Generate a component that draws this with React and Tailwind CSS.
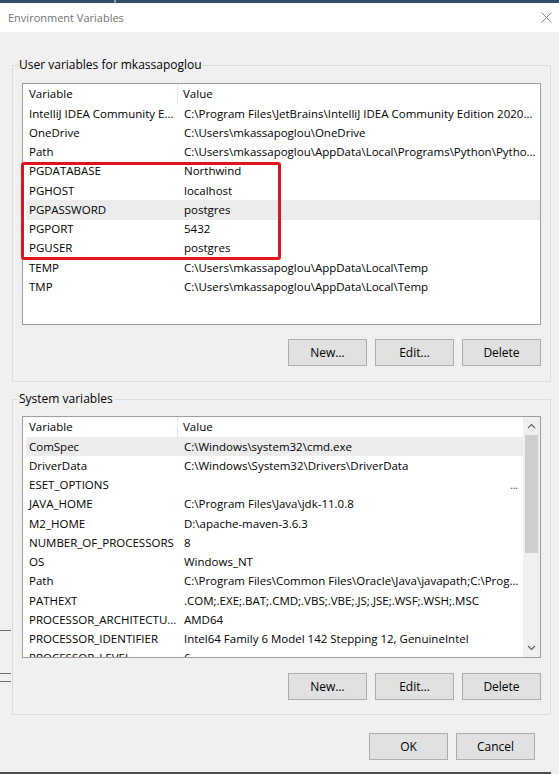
import React from 'react';

const userVars = [
  ['IntelliJ IDEA Community E…', 'C:\\Program Files\\JetBrains\\IntelliJ IDEA Community Edition 2020…'],
  ['OneDrive', 'C:\\Users\\mkassapoglou\\OneDrive'],
  ['Path', 'C:\\Users\\mkassapoglou\\AppData\\Local\\Programs\\Python\\Pytho…'],
  ['PGDATABASE', 'Northwind'],
  ['PGHOST', 'localhost'],
  ['PGPASSWORD', 'postgres', true],
  ['PGPORT', '5432'],
  ['PGUSER', 'postgres'],
  ['TEMP', 'C:\\Users\\mkassapoglou\\AppData\\Local\\Temp'],
  ['TMP', 'C:\\Users\\mkassapoglou\\AppData\\Local\\Temp'],
];

const sysVars = [
  ['ComSpec', 'C:\\Windows\\system32\\cmd.exe', true],
  ['DriverData', 'C:\\Windows\\System32\\Drivers\\DriverData'],
  ['ESET_OPTIONS', null],
  ['JAVA_HOME', 'C:\\Program Files\\Java\\jdk-11.0.8'],
  ['M2_HOME', 'D:\\apache-maven-3.6.3'],
  ['NUMBER_OF_PROCESSORS', '8'],
  ['OS', 'Windows_NT'],
  ['Path', 'C:\\Program Files\\Common Files\\Oracle\\Java\\javapath;C:\\Prog…'],
  ['PATHEXT', '.COM;.EXE;.BAT;.CMD;.VBS;.VBE;.JS;.JSE;.WSF;.WSH;.MSC'],
  ['PROCESSOR_ARCHITECTU…', 'AMD64'],
  ['PROCESSOR_IDENTIFIER', 'Intel64 Family 6 Model 142 Stepping 12, GenuineIntel'],
  ['PROCESSOR_LEVEL', '6'],
];

function Btn({ children }) {
  return (
    <button className="w-[79px] h-[27px] bg-[#e1e1e1] border border-[#adadad] text-[12px] text-black flex items-center justify-center">
      {children}
    </button>
  );
}

function Rows({ rows }) {
  return (
    <div className="flex-1 min-w-0 overflow-hidden">
      <div className="flex h-[20px] items-center">
        <div className="w-[155px] pl-[6px] h-full flex items-center border-r border-[#e5e5e5]">Variable</div>
        <div className="pl-[5px]">Value</div>
      </div>
      {rows.map(([k, v, hi]) => (
        <div key={k} className={'flex h-[19.25px] items-center ml-[3px] whitespace-nowrap ' + (hi ? 'bg-[#ececec]' : '')}>
          <div className="w-[152px] shrink-0 pl-[3px]">{k}</div>
          {v === null
            ? <div className="flex-1 text-right pr-[5px] text-[10px] text-[#444]">…</div>
            : <div className="pl-[6px] overflow-hidden">{v}</div>}
        </div>
      ))}
    </div>
  );
}

function Chevron({ up }) {
  return (
    <svg width="9" height="6" viewBox="0 0 9 6" fill="none" stroke="#606060" strokeWidth="1.1">
      {up ? <polyline points="1,5 4.5,1.5 8,5" /> : <polyline points="1,1 4.5,4.5 8,1" />}
    </svg>
  );
}

export default function App() {
  return (
    <div className="relative w-[559px] h-[774px] overflow-hidden bg-[#f0f0f0] flex flex-col font-['Open_Sans',sans-serif] text-[11.5px] text-black leading-[14px]">
      {/* window frame strip */}
      <div className="h-[3px] bg-[#2f4c69] relative shrink-0">
        <div className="absolute left-[114px] top-0 w-[2px] h-[3px] bg-[#8aa2bb]" />
      </div>

      {/* title bar */}
      <div className="h-[29px] bg-white flex items-center justify-between pl-[8px] pr-[7px] shrink-0">
        <span className="text-[11px] text-[#737373]">Environment Variables</span>
        <svg width="11" height="11" viewBox="0 0 11 11" stroke="#888" strokeWidth="1">
          <line x1="0.5" y1="0.5" x2="10.5" y2="10.5" />
          <line x1="10.5" y1="0.5" x2="0.5" y2="10.5" />
        </svg>
      </div>

      {/* user variables */}
      <fieldset className="mt-[26px] ml-[12px] w-[539px] border border-[#dcdcdc] pl-[9px] pr-[9px] pt-[11px] pb-[15px]">
        <legend className="ml-[-4px] px-px text-[12px] leading-[14px]">User variables for mkassapoglou</legend>
        <div className="relative h-[242px] bg-white border border-[#9d9d9d] flex">
          <Rows rows={userVars} />
          <div className="absolute left-[-2px] top-[78px] w-[260px] h-[98px] border-[3px] border-[#e0141c] rounded-[3px]" />
        </div>
        <div className="mt-[14px] flex justify-end gap-[8px]">
          <Btn>New…</Btn>
          <Btn>Edit…</Btn>
          <Btn>Delete</Btn>
        </div>
      </fieldset>

      {/* system variables */}
      <fieldset className="mt-[10px] ml-[12px] w-[539px] border border-[#dcdcdc] pl-[9px] pr-[9px] pt-[10px] pb-[14px]">
        <legend className="ml-[-4px] px-px text-[12px] leading-[14px]">System variables</legend>
        <div className="h-[242px] bg-white border border-[#9d9d9d] flex">
          <Rows rows={sysVars} />
          <div className="w-[17px] shrink-0 bg-[#f0f0f0] flex flex-col items-center">
            <div className="h-[18px] flex items-center justify-center"><Chevron up /></div>
            <div className="w-[13px] h-[118px] bg-[#cdcdcd]" />
            <div className="flex-1" />
            <div className="h-[18px] flex items-center justify-center"><Chevron /></div>
          </div>
        </div>
        <div className="mt-[15px] flex justify-end gap-[8px]">
          <Btn>New…</Btn>
          <Btn>Edit…</Btn>
          <Btn>Delete</Btn>
        </div>
      </fieldset>

      <div className="mt-[18px] flex justify-end gap-[8px] pr-[24px]">
        <Btn>OK</Btn>
        <Btn>Cancel</Btn>
      </div>

      <div className="mt-auto h-[2px] bg-[#4d4d4d] mr-[8px]" />

      {/* background window edges on the left */}
      <div className="absolute left-0 top-[630px] w-[11px] h-px bg-[#6b6b6b]" />
      <div className="absolute left-0 top-[673px] w-[11px] h-px bg-[#6b6b6b]" />
      <div className="absolute left-0 top-[681px] w-[11px] h-px bg-[#6b6b6b]" />
    </div>
  );
}
